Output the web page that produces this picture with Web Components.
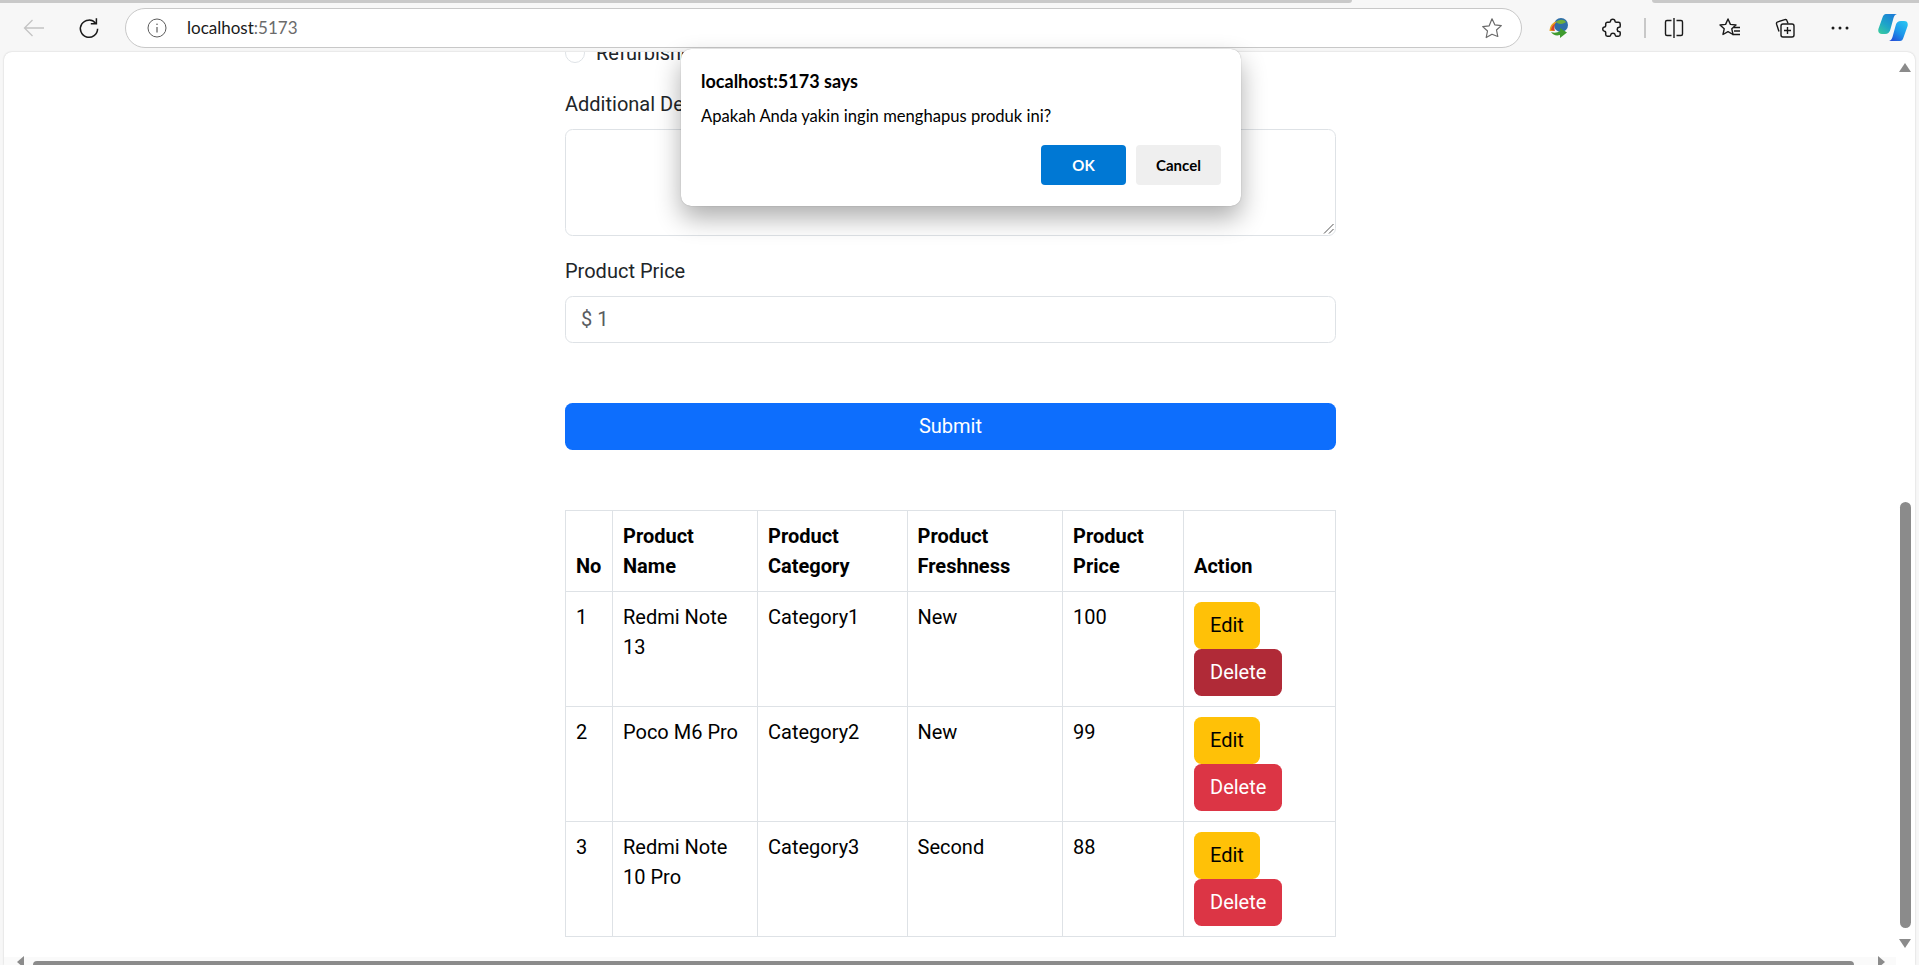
<!DOCTYPE html>
<html>
<head>
<meta charset="utf-8">
<title>localhost:5173</title>
<style>
    html, body { margin: 0; height: 100%; overflow: hidden; background: #f7f7f7; }
</style>
</head>
<body>

<template id="template-browser-window">
    <slot name="toolbar"></slot>
    <main>
        <slot></slot>
    </main>
    <slot name="overlay"></slot>
    <style>
        :host {
            display: flex;
            flex-direction: column;
            position: relative;
            height: 965px;
            background: #f7f7f7;
        }
        main {
            flex: 1;
            min-height: 0;
            position: relative;
            overflow: hidden;
            background: #fff;
            margin: 0 4px;
            border-top-left-radius: 8px;
            border-top-right-radius: 8px;
            box-shadow: 0 0 2px rgba(0, 0, 0, .2);
        }
    </style>
</template>

<template id="template-browser-toolbar">
    <div class="tabs"><i class="left"></i><i class="right"></i></div>
    <nav>
        <svg class="back" width="24" height="24" viewBox="0 0 24 24" fill="none" stroke="#c4c4c4" stroke-width="1.3"><path d="M22 12H2.500M10.500 4 2.500 12l8 8"/></svg>
        <svg class="reload" width="24" height="24" viewBox="0 0 24 24" fill="none" stroke="#1a1a1a" stroke-width="1.5"><path d="M18.600 7.200A8.600 8.600 0 1 0 20.600 12.800"/><path d="M19.400 2.200v5.600h-5.600"/></svg>
        <div class="address">
            <svg width="20" height="20" viewBox="0 0 20 20" fill="none" stroke="#5c5c5c" stroke-width="1"><circle cx="10" cy="10" r="9"/><path d="M10 9v5.500" stroke-width="1.200"/><circle cx="10" cy="6.300" r=".8" fill="#5c5c5c" stroke="none"/></svg>
            <span class="url">localhost<span>:5173</span></span>
            <svg class="star" width="22" height="22" viewBox="0 0 22 22" fill="none" stroke="#6a6a6a" stroke-width="1.200" stroke-linejoin="round"><path d="m11 1.800 2.800 6 6.500.8-4.800 4.400 1.300 6.500L11 17.200l-5.800 3.300 1.300-6.500-4.800-4.400 6.500-.8z"/></svg>
        </div>
        <div class="tools">
            <svg class="idm" width="22" height="22" viewBox="0 0 22 22"><circle cx="13" cy="8" r="7" fill="#2f6fa8"/><path d="M8 5c3-3 8-3 10 0-2 2-7 3-10 0z" fill="#6fae3c"/><path d="M1.500 14C2 8 5 5 9 4.500 6 7 5 10 6 14z" fill="#e8a21c"/><path d="M3 13c.5-3 2-5.500 4.500-6.500C6 9 6 11 7 14z" fill="#d9412b"/><path d="M3 15c3 1 6 1 9-1v-3l7 4.500-7 5.500v-3c-4 1-7 0-9-3z" fill="#3f9b2e"/></svg>
            <svg width="24" height="24" viewBox="0 0 24 24" fill="none" stroke="#1a1a1a" stroke-width="1.500" stroke-linejoin="round"><path d="M9.500 5.200c.2-2.600 4.300-2.600 4.500 0 0 .8.500 1 1.300 1h2.200c1 0 1.700.7 1.700 1.700v2.300c0 .8-.5 1.100-1.200 1.100-2.400.2-2.400 4 0 4.200.7 0 1.200.4 1.200 1.100v1.900c0 1-.7 1.700-1.700 1.700h-2c-.8 0-1.200-.4-1.300-1.200-.3-2.200-4.200-2.200-4.500 0-.1.800-.5 1.200-1.300 1.200H6.400c-1 0-1.700-.7-1.700-1.700v-2.100c0-.8-.5-1.200-1.200-1.200-2.400-.3-2.400-3.900 0-4.200.7 0 1.200-.4 1.200-1.200V7.900c0-1 .7-1.700 1.700-1.700h1.800c.8 0 1.300-.2 1.300-1z"/></svg>
            <b class="divider"></b>
            <svg class="split" width="24" height="24" viewBox="0 0 24 24" fill="none" stroke="#1a1a1a" stroke-width="1.400"><path d="M9.500 4.500H5A1.500 1.500 0 0 0 3.500 6v12A1.500 1.500 0 0 0 5 19.500h4.500M14.500 4.500H19A1.500 1.500 0 0 1 20.500 6v12a1.500 1.500 0 0 1-1.500 1.500h-4.500M12 2v20"/></svg>
            <svg class="favs" width="24" height="24" viewBox="0 0 24 24" fill="none" stroke="#1a1a1a" stroke-width="1.400" stroke-linejoin="round"><path d="m10 3 2.400 5.400 5.600.6-4.200 3.800 1.200 5.700L10 15.600l-5 2.900 1.200-5.700L2 9l5.600-.6z"/><path d="M15.500 11.500h6.500M16 15h6M14.500 18.500h7.500"/></svg>
            <svg width="24" height="24" viewBox="0 0 24 24" fill="none" stroke="#1a1a1a" stroke-width="1.400" stroke-linejoin="round"><path d="M6 15.500 3.600 8.200c-.3-1 .2-2 1.200-2.300l7-2.200c1-.3 2 .2 2.300 1.200l.9 2.600"/><rect x="8" y="8" width="13" height="13" rx="2"/><path d="M14.500 11v7M11 14.500h7"/></svg>
            <svg width="24" height="24" viewBox="0 0 24 24" fill="#1a1a1a"><circle cx="5" cy="12" r="1.500"/><circle cx="12" cy="12" r="1.500"/><circle cx="19" cy="12" r="1.500"/></svg>
            <svg class="copilot" width="30" height="27" viewBox="0 0 30 27">
                <defs>
                    <linearGradient id="cp-a" x1="0" y1="1" x2=".7" y2="0"><stop offset="0" stop-color="#3ccf9a"/><stop offset=".5" stop-color="#1da5c9"/><stop offset="1" stop-color="#1d7fd6"/></linearGradient>
                    <linearGradient id="cp-b" x1=".2" y1="1" x2=".9" y2="0"><stop offset="0" stop-color="#2450d8"/><stop offset=".45" stop-color="#1e96ea"/><stop offset="1" stop-color="#29c6f2"/></linearGradient>
                </defs>
                <path d="M8 0H19Q16.500 .5 15.500 4L12.500 15Q11.500 20 7 20H4Q-.5 20 .4 15L4.500 3.500Q5.500 0 8 0Z" fill="url(#cp-a)"/>
                <path d="M22 27H11Q13.500 26.500 14.500 23L17.500 12Q18.500 7 23 7H26Q30.500 7 29.600 12L25.500 23.500Q24.500 27 22 27Z" fill="url(#cp-b)"/>
            </svg>
        </div>
    </nav>
    <style>
        :host { display: block; height: 52px; flex: none; font-family: Lato, "Open Sans", sans-serif; }
        .tabs { height: 3px; position: relative; background: #f7f7f7; }
        .tabs i { position: absolute; top: 0; height: 3px; background: #c9c9c9; }
        .left { left: 0; width: 1352px; border-bottom-right-radius: 5px; }
        .right { left: 1652px; right: 0; border-bottom-left-radius: 5px; }
        nav {
            height: 49px;
            display: flex;
            align-items: center;
            padding: 0 0 0 22px;
            box-sizing: border-box;
        }
        .reload { margin-left: 31px; }
        .address {
            width: 1397px;
            height: 40px;
            margin-left: 24px;
            flex: none;
            box-sizing: border-box;
            border: 1px solid #c8c8c8;
            border-radius: 20px;
            background: #fff;
            display: flex;
            align-items: center;
            padding: 0 18px 0 21px;
        }
        .url { margin-left: 20px; font-size: 17px; color: #1a1a1a; flex: 1; }
        .url span { color: #6b6b6b; }
        .tools {
            display: flex;
            align-items: center;
            margin-left: 26px;
            gap: 31px;
        }
        .divider { width: 2px; height: 20px; background: #c8c8c8; margin: 0 -15px 0 -12px; }
        .favs { margin-left: 1px; }
        .copilot { margin-left: -5px; flex: none; }
    </style>
</template>

<template id="template-form-field">
    <label><slot name="label"></slot></label>
    <slot></slot>
    <style>
        :host { display: block; margin-bottom: 20px; }
        label { display: block; margin-bottom: 10px; line-height: 30px; }
    </style>
</template>

<template id="template-form-input">
    <div class="box"><slot></slot><svg class="grip" width="11" height="11" viewBox="0 0 11 11" fill="none" stroke="#555" stroke-width="1"><path d="M10.500 1 1 10.500M10.500 6 6 10.500"/></svg></div>
    <style>
        :host { display: block; }
        .box {
            position: relative;
            box-sizing: border-box;
            height: var(--box-height, 47px);
            border: 1px solid #dee2e6;
            border-radius: 7.500px;
            padding: 7px 15px;
            line-height: 30px;
            color: #595c5f;
        }
        .grip { display: none; position: absolute; right: 1px; bottom: 1px; }
        :host([resizable]) .grip { display: block; }
    </style>
</template>

<template id="template-form-radio">
    <i></i><slot></slot>
    <style>
        :host { display: flex; align-items: center; gap: 11px; line-height: 30px; }
        i {
            display: block;
            width: 20px;
            height: 20px;
            box-sizing: border-box;
            border: 1px solid #dee2e6;
            border-radius: 50%;
        }
    </style>
</template>

<template id="template-app-button">
    <slot></slot>
    <style>
        :host {
            display: inline-block;
            box-sizing: border-box;
            height: 47px;
            padding: 0 16px;
            border-radius: 7.500px;
            line-height: 47px;
            text-align: center;
            color: #fff;
            background: #dc3545;
        }
        :host([variant="warning"]) { background: #ffc107; color: #000; }
        :host([variant="hover"]) { background: #b02a37; }
        :host([variant="primary"]) { display: block; background: #0d6efd; }
    </style>
</template>

<template id="template-product-table">
    <table>
        <thead>
            <tr>
                <th>No</th>
                <th>Product Name</th>
                <th>Product Category</th>
                <th>Product Freshness</th>
                <th>Product Price</th>
                <th>Action</th>
            </tr>
        </thead>
        <tbody></tbody>
    </table>
    <style>
        :host { display: block; margin-top: 60px; }
        table {
            width: 771px;
            table-layout: fixed;
            border-collapse: collapse;
            line-height: 30px;
            color: #000;
        }
        th, td {
            box-sizing: border-box;
            border: 1px solid #dee2e6;
            padding: 10px;
            text-align: left;
            vertical-align: top;
            font-weight: 400;
        }
        th { vertical-align: bottom; font-weight: 700; height: 81px; }
        th:nth-child(1) { width: 47px; }
        th:nth-child(2) { width: 145px; }
        th:nth-child(3) { width: 149.500px; }
        th:nth-child(4) { width: 155.500px; }
        th:nth-child(5) { width: 121px; }
        .actions { display: flex; flex-direction: column; align-items: flex-start; }
    </style>
</template>

<template id="template-alert-dialog">
    <h1><slot name="heading"></slot></h1>
    <p><slot></slot></p>
    <footer>
        <button class="ok">OK</button>
        <button>Cancel</button>
    </footer>
    <style>
        :host {
            position: absolute;
            left: 681px;
            top: 49px;
            width: 560px;
            height: 157px;
            box-sizing: border-box;
            padding: 22px 20px 0;
            background: #fff;
            border-radius: 10px;
            box-shadow: 0 0 1px rgba(0, 0, 0, .35), 0 12px 26px rgba(0, 0, 0, .32);
            font-family: Lato, "Open Sans", sans-serif;
            color: #000;
            z-index: 5;
        }
        h1 { margin: 0; font-size: 18px; line-height: 20px; font-weight: 700; }
        p { margin: 15px 0 0; font-size: 16.600px; line-height: 20px; }
        footer { display: flex; justify-content: flex-end; gap: 10px; margin-top: 19px; }
        button {
            width: 85px;
            height: 40px;
            border: 0;
            border-radius: 4px;
            padding: 0;
            background: #efefef;
            color: #000;
            font: 700 15px Lato, "Open Sans", sans-serif;
        }
        .ok { background: #0078d4; color: #fff; }
    </style>
</template>

<template id="template-page-scrollbars">
    <div class="v"><b class="up"></b><i></i><b class="down"></b></div>
    <div class="h"><b class="prev"></b><i></i><b class="next"></b></div>
    <style>
        :host { display: block; position: absolute; inset: 0; pointer-events: none; }
        .v { position: absolute; right: 0; top: 0; bottom: 8px; width: 19px; }
        .h { position: absolute; left: 0; right: 19px; bottom: 0; height: 8px; background: #fafafa; }
        .v i { position: absolute; top: 450px; height: 426px; left: 4px; width: 11px; background: #8b8b8b; border-radius: 6px; }
        .h i { position: absolute; left: 29px; width: 1821px; bottom: 0; height: 4px; background: #8b8b8b; border-radius: 5px 5px 0 0; }
        b { position: absolute; width: 0; height: 0; border: 0 solid transparent; }
        .up { top: 11px; left: 3px; border-width: 0 6.500px 9px; border-bottom-color: #8b8b8b; }
        .down { bottom: 9px; left: 3px; border-width: 9px 6.500px 0; border-top-color: #8b8b8b; }
        .prev { left: 13px; bottom: -3px; border-width: 6px 7px 6px 0; border-right-color: #8b8b8b; }
        .next { left: 1874px; bottom: -3px; border-width: 6px 0 6px 7px; border-left-color: #8b8b8b; }
    </style>
</template>

<template id="template-product-page">
    <div class="sheet"><slot></slot></div>
    <style>
        :host {
            display: block;
            font-family: Roboto, "Liberation Sans", sans-serif;
            font-size: 20px;
            color: #212529;
        }
        .sheet {
            width: 771px;
            margin-left: 561px;
            padding-top: 1px;
            margin-top: -15px;
        }
    </style>
</template>

<browser-window>
    <browser-toolbar slot="toolbar"></browser-toolbar>
    <product-page>
        <form-radio>Refurbished</form-radio>
        <form-field style="margin-top:21px">
            <span slot="label">Additional Description</span>
            <form-input resizable style="--box-height:107px"></form-input>
        </form-field>
        <form-field style="margin-bottom:60px">
            <span slot="label">Product Price</span>
            <form-input>$ 1</form-input>
        </form-field>
        <app-button variant="primary">Submit</app-button>
        <product-table></product-table>
    </product-page>
    <page-scrollbars></page-scrollbars>
    <alert-dialog slot="overlay">
        <span slot="heading">localhost:5173 says</span>
        Apakah Anda yakin ingin menghapus produk ini?
    </alert-dialog>
</browser-window>

<script>
    const fromTemplate = (id) => class extends HTMLElement {
        constructor() {
            super();
            const template = document.getElementById(id).content;
            this.attachShadow({ mode: 'open' }).appendChild(template.cloneNode(true));
        }
    };

    ['browser-window', 'browser-toolbar', 'form-field', 'form-input', 'form-radio',
     'app-button', 'alert-dialog', 'page-scrollbars', 'product-page'].forEach((name) => {
        customElements.define(name, fromTemplate('template-' + name));
    });

    const products = [
        { name: 'Redmi Note 13', category: 'Category1', freshness: 'New', price: 100, hover: true },
        { name: 'Poco M6 Pro', category: 'Category2', freshness: 'New', price: 99 },
        { name: 'Redmi Note 10 Pro', category: 'Category3', freshness: 'Second', price: 88 },
    ];

    customElements.define('product-table', class extends fromTemplate('template-product-table') {
        connectedCallback() {
            this.shadowRoot.querySelector('tbody').innerHTML = products.map((p, i) => `
                <tr>
                    <td>${i + 1}</td>
                    <td>${p.name}</td>
                    <td>${p.category}</td>
                    <td>${p.freshness}</td>
                    <td>${p.price}</td>
                    <td><div class="actions">
                        <app-button variant="warning">Edit</app-button>
                        <app-button ${p.hover ? 'variant="hover"' : ''}>Delete</app-button>
                    </div></td>
                </tr>`).join('');
        }
    });
</script>
</body>
</html>
